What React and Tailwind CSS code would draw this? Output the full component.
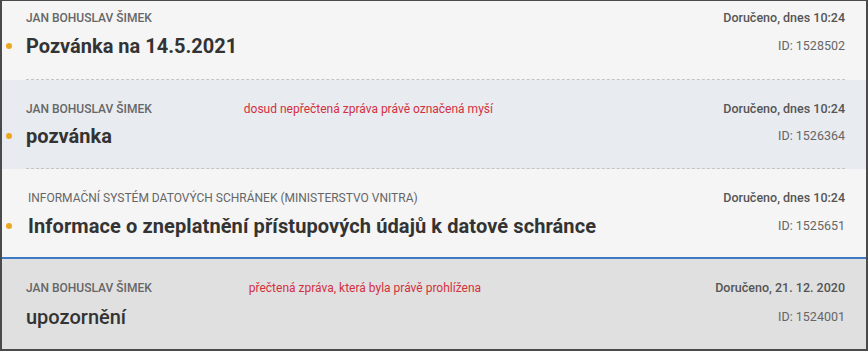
const messages = [
  {
    sender: "JAN BOHUSLAV ŠIMEK",
    title: "Pozvánka na 14.5.2021",
    delivered: "Doručeno, dnes 10:24",
    id: "ID: 1528502",
    unread: true,
    bg: "bg-[#f5f5f5]",
    top: "pt-[10px]",
    gap: "mt-[7px]",
    dotGap: "mt-[21px]",
    bottom: "pb-[19px]",
    sep: "dashed",
  },
  {
    sender: "JAN BOHUSLAV ŠIMEK",
    note: "dosud nepřečtená zpráva právě označená myší",
    noteClass: "ml-[92px]",
    title: "pozvánka",
    delivered: "Doručeno, dnes 10:24",
    id: "ID: 1526364",
    unread: true,
    bg: "bg-[#e8ebf0]",
    top: "pt-[22px]",
    gap: "mt-[6px]",
    dotGap: "mt-[20px]",
    bottom: "pb-[18px]",
    sep: "dashed",
  },
  {
    sender: "INFORMAČNÍ SYSTÉM DATOVÝCH SCHRÁNEK (MINISTERSTVO VNITRA)",
    senderClass: "font-normal pl-[2px]",
    title: "Informace o zneplatnění přístupových údajů k datové schránce",
    titleClass: "pl-[2px] text-[19px] tracking-[0.1px]",
    delivered: "Doručeno, dnes 10:24",
    id: "ID: 1525651",
    unread: true,
    bg: "bg-[#f5f5f5]",
    top: "pt-[22px]",
    gap: "mt-[7px]",
    dotGap: "mt-[21px]",
    bottom: "pb-[17px]",
    sep: "blue",
  },
  {
    sender: "JAN BOHUSLAV ŠIMEK",
    note: "přečtená zpráva, která byla právě prohlížena",
    noteClass: "ml-[97px]",
    title: "upozornění",
    medium: true,
    delivered: "Doručeno, 21. 12. 2020",
    id: "ID: 1524001",
    unread: false,
    bg: "bg-[#e0e0e0]",
    top: "pt-[22px]",
    gap: "mt-[8px]",
    dotGap: "mt-[22px]",
    bottom: "pb-[16px]",
    sep: "none",
  },
];

function MessageRow({ m }) {
  return (
    <div
      className={`flex ${m.bg} ${
        m.sep === "blue" ? "border-b-2 border-[#3c7ac6]" : ""
      }`}
    >
      {/* unread dot */}
      <div className={`w-[24px] ${m.top}`}>
        <div className={`${m.dotGap} flex h-[28px] items-center pl-[4px]`}>
          {m.unread && <span className="h-[6px] w-[6px] rounded-full bg-[#eba81e]" />}
        </div>
      </div>
      <div
        className={`mr-[21px] flex flex-1 justify-between ${m.top} ${m.bottom} ${
          m.sep === "dashed" ? "border-b border-dashed border-[#c4c4c4]" : ""
        }`}
      >
        {/* left: sender + title */}
        <div className="flex flex-col">
          <div className="flex h-[14px] items-center">
            <span className={`text-[12px] uppercase text-[#666] ${m.senderClass || "font-medium"}`}>
              {m.sender}
            </span>
            {m.note && (
              <span className={`text-[12px] text-[#d3303f] ${m.noteClass}`}>{m.note}</span>
            )}
          </div>
          <div
            className={`${m.gap} flex h-[28px] items-center text-[20px] text-[#333] ${
              m.medium ? "font-medium" : "font-bold"
            } ${m.titleClass || ""}`}
          >
            {m.title}
          </div>
        </div>
        {/* right: delivered + id */}
        <div className="flex flex-col items-end">
          <div className="flex h-[14px] items-center text-[12.5px] font-medium text-[#555]">
            {m.delivered}
          </div>
          <div className={`${m.gap} flex h-[28px] items-center text-[12.5px] text-[#666]`}>
            {m.id}
          </div>
        </div>
      </div>
    </div>
  );
}

export default function App() {
  return (
    <div
      className="h-[352px] w-[868px] overflow-hidden bg-white"
      style={{ fontFamily: "Roboto, 'Noto Sans', sans-serif" }}
    >
      <div className="h-[351px] overflow-hidden border-2 border-t border-[#4a4a4a] bg-[#e0e0e0]">
        {messages.map((m) => (
          <MessageRow key={m.id} m={m} />
        ))}
      </div>
    </div>
  );
}
